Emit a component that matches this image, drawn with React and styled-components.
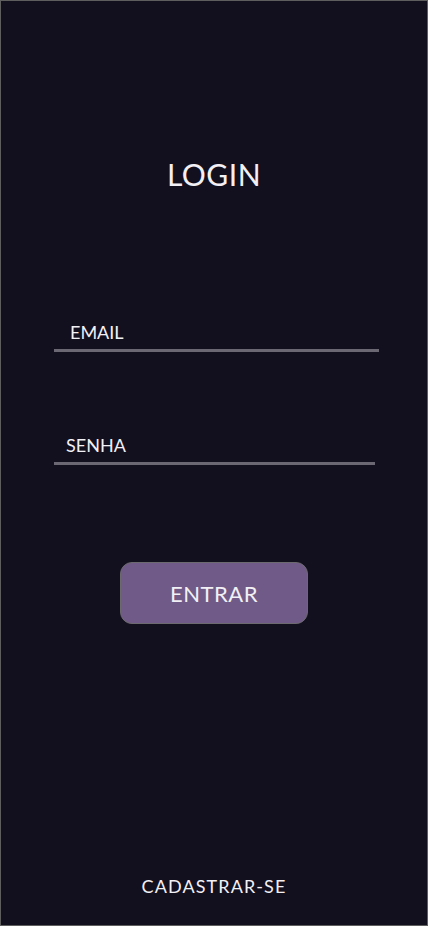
import React from 'react'
import styled, { createGlobalStyle } from 'styled-components'

const Global = createGlobalStyle`
    html, body {
        margin: 0;
        padding: 0;
        background: #120f1e;
    }
    * { box-sizing: border-box; }
`

const Screen = styled.div`
    width: 428px;
    height: 926px;
    background: #120f1e;
    border: 1px solid #5e5e5e;
    display: flex;
    flex-direction: column;
    align-items: center;
    font-family: 'Lato', 'Open Sans', sans-serif;
    color: #f2f0f5;
`

const Title = styled.h1`
    margin: 155px 0 0 0;
    font-size: 30px;
    font-weight: 400;
    line-height: 36px;
    letter-spacing: 0.5px;
`

const Form = styled.form`
    align-self: stretch;
    display: flex;
    flex-direction: column;
    padding-left: 53px;
    margin-top: 129px;
    gap: 82px;
`

const Field = styled.input`
    width: ${props => props.$width}px;
    height: 31px;
    padding: 0 0 7px ${props => props.$indent}px;
    background: transparent;
    border: none;
    border-bottom: 3px solid #6b6873;
    outline: none;
    color: #f2f0f5;
    font-family: inherit;
    font-size: 18px;

    &::placeholder {
        color: #f2f0f5;
        opacity: 1;
    }
`

const Button = styled.button`
    margin-top: 97px;
    width: 188px;
    height: 62px;
    border-radius: 12px;
    border: 1px solid #6c6a6e;
    background: #705a87;
    color: #f2f0f5;
    font-family: inherit;
    font-size: 22px;
    letter-spacing: 0.5px;
    cursor: pointer;
`

const Register = styled.a`
    margin-top: auto;
    margin-bottom: 28px;
    font-size: 18px;
    letter-spacing: 1.1px;
    color: #f2f0f5;
    text-decoration: none;
    cursor: pointer;
`

export default function App() {
    return (
        <>
            <Global />
            <Screen>
                <Title>LOGIN</Title>
                <Form onSubmit={e => e.preventDefault()}>
                    <Field type="email" placeholder="EMAIL" $width={325} $indent={16} />
                    <Field type="password" placeholder="SENHA" $width={321} $indent={12} />
                </Form>
                <Button type="button">ENTRAR</Button>
                <Register>CADASTRAR-SE</Register>
            </Screen>
        </>
    )
}
